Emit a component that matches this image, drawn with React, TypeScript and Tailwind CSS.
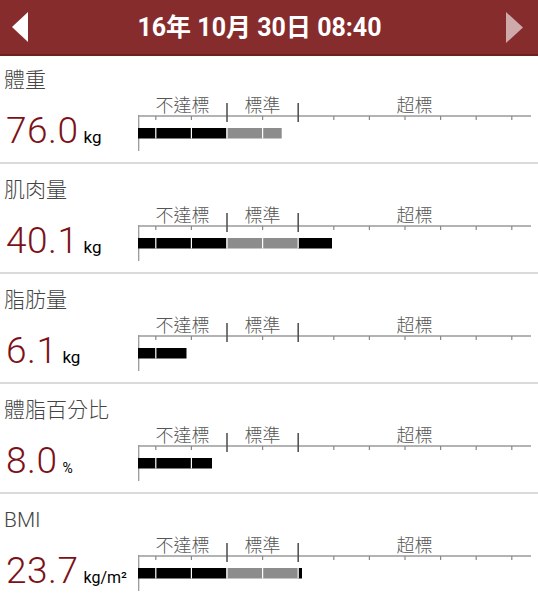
const SANS = "font-['Roboto','Noto_Sans_CJK_TC',sans-serif]";

type Seg = [number, string];

const BLACK = "#000000";
const GRAY = "#8c8c8c";

const rows: { title: string; value: string; unit: string; unitSize: string; bar: Seg[] }[] = [
  { title: "體重", value: "76.0", unit: "kg", unitSize: "text-[17px]", bar: [[88.5, BLACK], [143.7, GRAY]] },
  { title: "肌肉量", value: "40.1", unit: "kg", unitSize: "text-[17px]", bar: [[88.5, BLACK], [160, GRAY], [194, BLACK]] },
  { title: "脂肪量", value: "6.1", unit: "kg", unitSize: "text-[17px]", bar: [[48.5, BLACK]] },
  { title: "體脂百分比", value: "8.0", unit: "%", unitSize: "text-[14px]", bar: [[74, BLACK]] },
  { title: "BMI", value: "23.7", unit: "kg/m²", unitSize: "text-[16px]", bar: [[88.5, BLACK], [160, GRAY], [164, BLACK]] },
];

const TICKS = Array.from({ length: 11 }, (_, k) => 17.8 + 35.6 * k);

function Scale({ bar }: { bar: Seg[] }) {
  const end = bar[bar.length - 1][0];
  let start = 0;
  return (
    <div className="flex flex-col w-[400px]">
      {/* zone labels */}
      <div className="flex h-[20px] text-[18px] leading-[20px] font-light text-[#555] font-['Noto_Sans_CJK_TC',sans-serif]">
        <div className="w-[89px] text-center">不達標</div>
        <div className="w-[71px] text-center">標準</div>
        <div className="w-[233px] text-center">超標</div>
      </div>
      <svg width="400" height="38" className="overflow-visible">
        <line x1="0" y1="2" x2="393" y2="2" stroke="#9a9a9a" strokeWidth="1.3" />
        <line x1="0.7" y1="1" x2="0.7" y2="37" stroke="#9a9a9a" strokeWidth="1.3" />
        {TICKS.map((x, k) =>
          k === 2 || k === 4 ? (
            <line key={k} x1={x} y1="-11" x2={x} y2="8" stroke="#555" strokeWidth="1.6" />
          ) : (
            <line key={k} x1={x} y1="2" x2={x} y2="6" stroke="#888" strokeWidth="1.2" />
          )
        )}
        {bar.map(([to, color], i) => {
          const r = <rect key={i} x={start} y="14" width={to - start} height="10.5" fill={color} />;
          start = to;
          return r;
        })}
        {TICKS.filter((x) => x < end).map((x, i) => (
          <rect key={"g" + i} x={x - 0.6} y="14" width="1.2" height="10.5" fill="#ffffff" />
        ))}
      </svg>
    </div>
  );
}

export default function App() {
  return (
    <main className={`w-[538px] h-[600px] overflow-hidden bg-white ${SANS}`}>
      {/* Header */}
      <header className="h-[56px] bg-[#872c2d] border-b-2 border-[#6f2122] flex items-center pl-3 pr-[15px]">
        <svg width="17" height="31" viewBox="0 0 17 31">
          <polygon points="0,15 16,0 16,30" fill="#ffffff" />
        </svg>
        <div className="flex-1 flex justify-center pr-[16px] text-white font-bold text-[25px] leading-none">
          16年 10月 30日 08:40
        </div>
        <svg width="17" height="31" viewBox="0 0 17 31">
          <polygon points="17,15.5 0,0 0,31" fill="#ffffff" fillOpacity="0.6" />
        </svg>
      </header>

      {rows.map((row, i) => (
        <section
          key={row.title}
          className={`border-b-2 border-[#dadada] ${i === 0 ? "h-[108px] pt-[10px]" : "h-[110px] pt-3"}`}
        >
          <h2 className="pl-1 text-[21px] leading-[28px] text-[#444] font-light">{row.title}</h2>
          <div className="flex">
            <div className="w-[138px] pl-[6px] mt-[17px] flex items-baseline">
              <span className="text-[37px] leading-[40px] font-light tracking-[0.5px] text-[#7c1217]">
                {row.value}
              </span>
              <span className={`ml-[5px] text-black ${row.unitSize}`}>{row.unit}</span>
            </div>
            <Scale bar={row.bar} />
          </div>
        </section>
      ))}
    </main>
  );
}
